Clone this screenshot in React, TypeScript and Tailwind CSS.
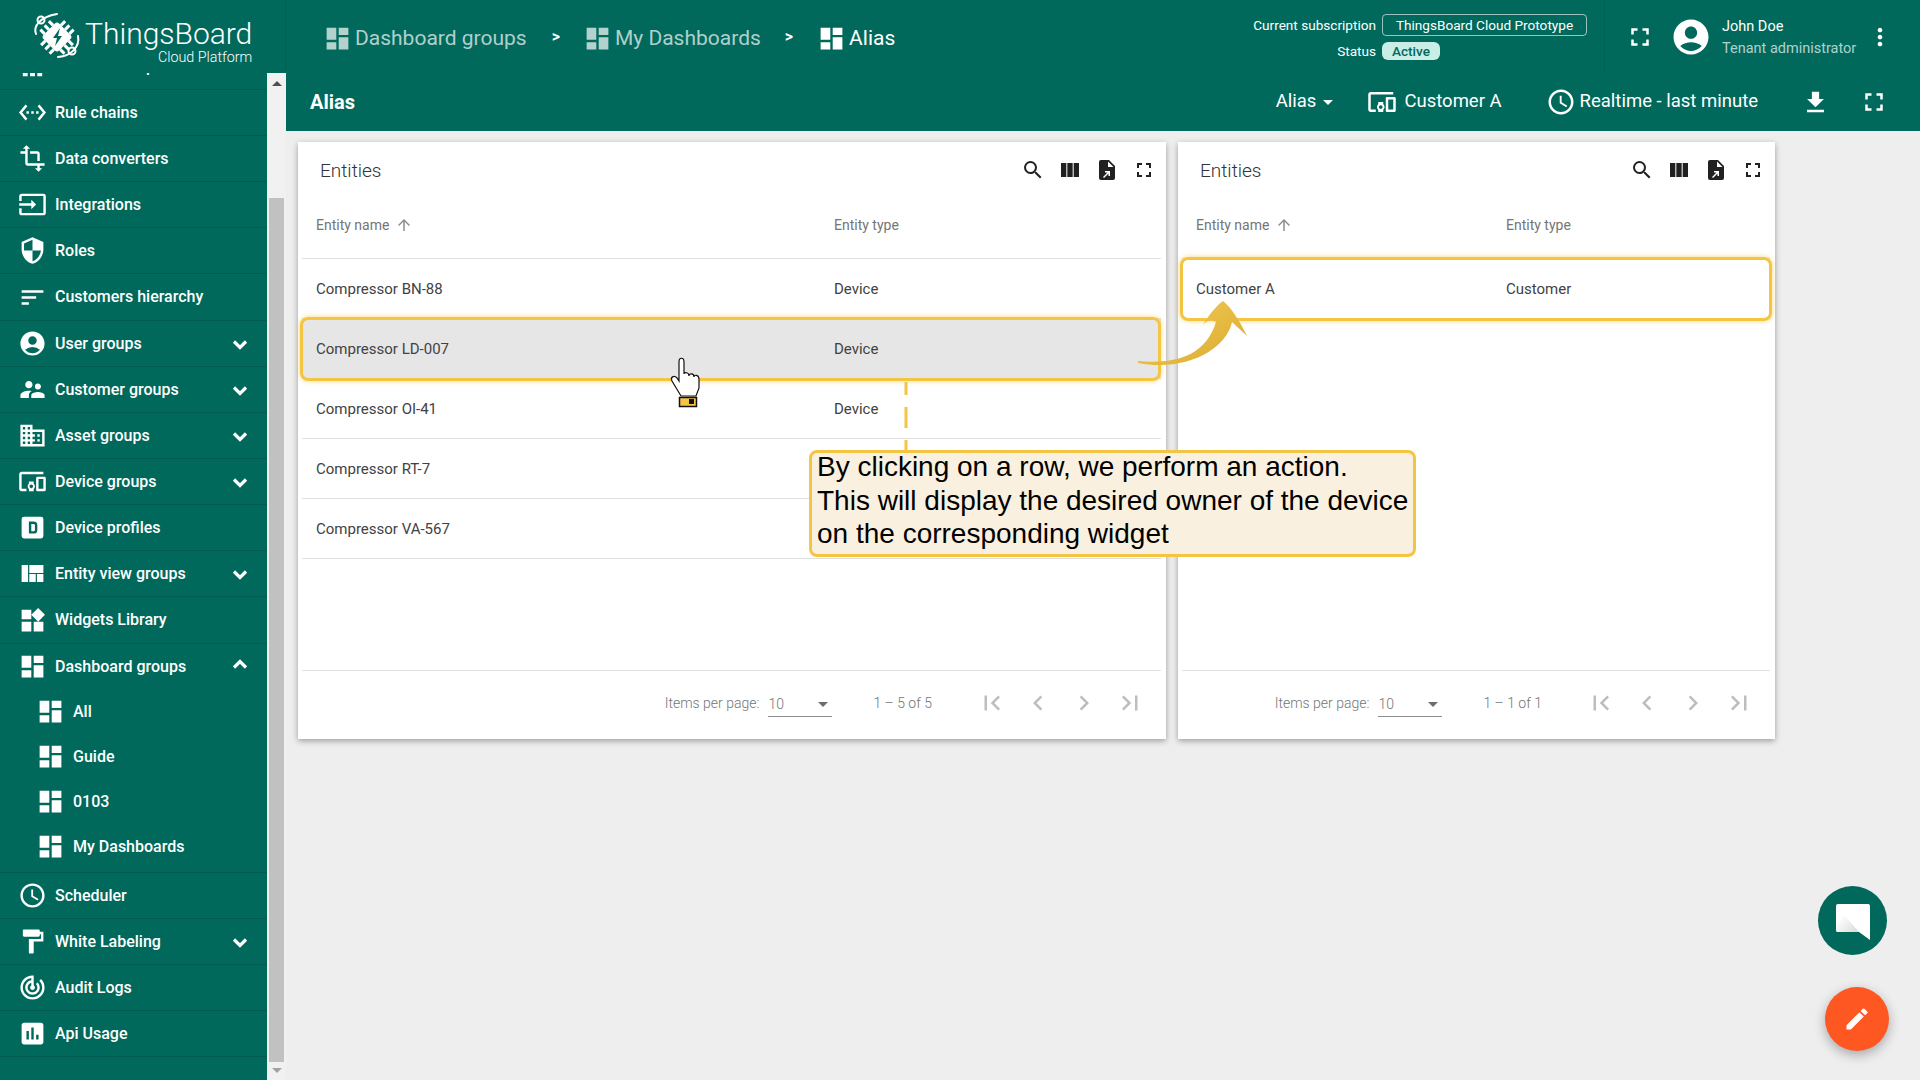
import type { ReactNode } from "react";
import {
  MdAccessTime,
  MdAccountCircle,
  MdApps,
  MdArrowDropDown,
  MdArrowUpward,
  MdAssessment,
  MdChevronLeft,
  MdChevronRight,
  MdDashboard,
  MdDevicesOther,
  MdDomain,
  MdEdit,
  MdFileDownload,
  MdFirstPage,
  MdFormatPaint,
  MdFullscreen,
  MdInput,
  MdLastPage,
  MdMoreVert,
  MdSchedule,
  MdSearch,
  MdSecurity,
  MdSettingsEthernet,
  MdSort,
  MdSupervisorAccount,
  MdTrackChanges,
  MdTransform,
  MdViewColumn,
  MdViewQuilt,
  MdWidgets,
} from "react-icons/md";

const DeviceProfileIcon = ({ size = 24 }: { size?: number }) => (
  <svg width={size} height={size} viewBox="0 0 24 24" fill="currentColor">
    <path
      fillRule="evenodd"
      d="M5 3h14a2 2 0 0 1 2 2v14a2 2 0 0 1-2 2H5a2 2 0 0 1-2-2V5a2 2 0 0 1 2-2zm4 4v10h4a3 3 0 0 0 3-3v-4a3 3 0 0 0-3-3H9zm2 2h2a1 1 0 0 1 1 1v4a1 1 0 0 1-1 1h-2V9z"
    />
  </svg>
);

const ExportIcon = ({ size = 24 }: { size?: number }) => (
  <svg width={size} height={size} viewBox="0 0 24 24" fill="currentColor">
    <path
      fillRule="evenodd"
      d="M6 2h8l6 6v12a2 2 0 0 1-2 2H6a2 2 0 0 1-2-2V4a2 2 0 0 1 2-2zm7 1.500V9h5.500L13 3.500zM9 20l4.500-4.500V18H15v-5h-5v1.500h2.500L8 19z"
    />
  </svg>
);

// the thick chevron of the expandable menu rows
const Chevron = ({ up }: { up?: boolean }) => (
  <svg width="16" height="12" viewBox="0 0 16 12" className={`mr-[19px] ${up ? "-mt-[6px]" : "mt-[3px]"}`}>
    <path
      d={up ? "M2 9.500l6-6 6 6" : "M2 2.500l6 6 6-6"}
      fill="none"
      stroke="currentColor"
      strokeWidth="3.200"
    />
  </svg>
);

const Logo = () => (
  <svg width="100" height="73" viewBox="0 0 100 73" className="shrink-0 text-white">
    <g fill="none" stroke="currentColor" strokeWidth="2">
      <path d="M36 34C33 26 40 17 57 14" strokeLinecap="round" />
      <circle cx="41" cy="20" r="3.500" />
      <path d="M78 36C80 46 72 56 58 57" strokeLinecap="round" />
      <circle cx="72" cy="51" r="3.500" />
    </g>
    <g transform="rotate(45 57 37)" fill="currentColor">
      <rect x="46" y="26" width="22" height="22" rx="3" />
      <path d="M50 20h3v6h-3zM56 20h3v6h-3zM62 20h3v6h-3zM50 48h3v6h-3zM56 48h3v6h-3zM62 48h3v6h-3zM40 30h6v3h-6zM40 36h6v3h-6zM40 42h6v3h-6zM68 30h6v3h-6zM68 36h6v3h-6zM68 42h6v3h-6z" />
    </g>
    <path d="M60 28l-7 10h4l-2 8 7-10h-4z" fill="#00695c" />
  </svg>
);

const NavRow = ({
  icon,
  label,
  arrow,
  tall,
}: {
  icon: ReactNode;
  label: string;
  arrow?: boolean;
  tall?: boolean;
}) => (
  <div
    className={`flex shrink-0 items-center border-b border-[#005a4f] pl-[18px] ${
      tall ? "h-[47px]" : "h-[46px]"
    }`}
  >
    <span className="flex w-[37px] shrink-0">{icon}</span>
    <span className="flex-1 text-[16px] font-medium whitespace-nowrap">{label}</span>
    {arrow && <Chevron />}
  </div>
);

const SubRow = ({ label }: { label: string }) => (
  <div className="flex h-[45px] items-center pl-[36px]">
    <span className="flex w-[37px] shrink-0">
      <MdDashboard size={29} />
    </span>
    <span className="text-[16px] font-medium">{label}</span>
  </div>
);

const Sidebar = () => (
  <aside className="relative z-10 flex h-full w-[286px] shrink-0 flex-col bg-[#00695c] text-white">
    <div className="flex h-[73px] shrink-0 items-center border-r border-[#005f53]">
      <Logo />
      <div className="-ml-[15px] flex flex-col items-end">
        <span className="mt-[9px] text-[30px] leading-[31px] font-light">ThingsBoard</span>
        <span className="text-[14.300px] leading-[16px] font-light">Cloud Platform</span>
      </div>
    </div>
    <div className="flex min-h-0 flex-1">
      <nav className="w-[267px] shrink-0 overflow-hidden">
        <div className="-mt-[29px] flex flex-col">
          <NavRow icon={<MdApps size={29} />} label="Solution templates" />
          <NavRow icon={<MdSettingsEthernet size={29} />} label="Rule chains" />
          <NavRow icon={<MdTransform size={29} />} label="Data converters" />
          <NavRow icon={<MdInput size={29} />} label="Integrations" />
          <NavRow icon={<MdSecurity size={29} />} label="Roles" />
          <NavRow icon={<MdSort size={29} />} label="Customers hierarchy" tall />
          <NavRow icon={<MdAccountCircle size={29} />} label="User groups" arrow />
          <NavRow icon={<MdSupervisorAccount size={29} />} label="Customer groups" arrow />
          <NavRow icon={<MdDomain size={29} />} label="Asset groups" arrow />
          <NavRow icon={<MdDevicesOther size={29} />} label="Device groups" arrow />
          <NavRow icon={<DeviceProfileIcon size={29} />} label="Device profiles" />
          <NavRow icon={<MdViewQuilt size={29} />} label="Entity view groups" arrow />
          <NavRow icon={<MdWidgets size={29} />} label="Widgets Library" tall />
          <div className="flex h-[45px] shrink-0 items-center pl-[18px]">
            <span className="flex w-[37px] shrink-0">
              <MdDashboard size={29} />
            </span>
            <span className="flex-1 text-[16px] font-medium">Dashboard groups</span>
            <Chevron up />
          </div>
          <div className="flex h-[184px] shrink-0 flex-col border-b border-[#005a4f]">
            <SubRow label="All" />
            <SubRow label="Guide" />
            <SubRow label="0103" />
            <SubRow label="My Dashboards" />
          </div>
          <NavRow icon={<MdSchedule size={29} />} label="Scheduler" />
          <NavRow icon={<MdFormatPaint size={29} />} label="White Labeling" arrow />
          <NavRow icon={<MdTrackChanges size={29} />} label="Audit Logs" />
          <NavRow icon={<MdAssessment size={29} />} label="Api Usage" />
        </div>
      </nav>
      <div className="flex w-[19px] shrink-0 flex-col items-center bg-[#f1f1f1]">
        <div className="mt-[8px] h-0 w-0 border-x-[5px] border-b-[5px] border-x-transparent border-b-[#505050]" />
        <div className="mt-[112px] h-[864px] w-[15px] shrink-0 bg-[#c1c1c1]" />
        <div className="mt-[6px] h-0 w-0 border-x-[5px] border-t-[5px] border-x-transparent border-t-[#a3a3a3]" />
      </div>
    </div>
  </aside>
);

const Crumb = ({ label, dim }: { label: string; dim?: boolean }) => (
  <div className={`flex items-center ${dim ? "text-white/70" : "text-white"}`}>
    <MdDashboard size={29} className="mr-[3px]" />
    <span className="text-[21px] font-normal">{label}</span>
  </div>
);

const TopBar = () => (
  <header className="h-[131px] shrink-0 bg-[#00695c] text-white">
    <div className="flex h-[73px] items-center">
      <div className="mt-[4px] flex items-center pl-[37px]">
        <Crumb label="Dashboard groups" dim />
        <span className="ml-[25px] mr-[23px] -mt-[3px] text-[16px] font-bold">&gt;</span>
        <Crumb label="My Dashboards" dim />
        <span className="ml-[24px] mr-[24px] -mt-[3px] text-[16px] font-bold">&gt;</span>
        <Crumb label="Alias" />
      </div>
      <div className="mt-[2px] ml-auto flex h-full shrink-0 flex-col justify-center gap-[5px] text-[13.600px] whitespace-nowrap">
        <div className="flex items-center justify-end">
          <span className="mr-[6px]">Current subscription</span>
          <span className="flex h-[22px] w-[205px] shrink-0 items-center justify-center rounded-[4px] border border-white/60">
            ThingsBoard Cloud Prototype
          </span>
        </div>
        <div className="flex items-center justify-end pr-[147px]">
          <span className="mr-[6px]">Status</span>
          <span className="flex h-[18px] w-[58px] shrink-0 items-center justify-center rounded-[6px] bg-[#c8eee6] font-medium text-[#00695c]">
            Active
          </span>
        </div>
      </div>
      <div className="ml-[17px] flex h-full w-[316px] shrink-0 items-center border-l border-[#005f53]">
        <MdFullscreen size={30} className="ml-[20px]" />
        <MdAccountCircle size={42} className="ml-[15px]" />
        <div className="mt-[2px] ml-[10px] flex flex-col gap-[4px] text-[14.500px] leading-[18px] whitespace-nowrap">
          <span>John Doe</span>
          <span className="text-white/70">Tenant administrator</span>
        </div>
        <MdMoreVert size={28} className="ml-[10px]" />
      </div>
    </div>
    <div className="flex h-[58px] items-center">
      <span className="pl-[24px] text-[20px] font-bold">Alias</span>
      <div className="ml-auto flex items-center pr-[31px] text-[18.500px]">
        <span>Alias</span>
        <MdArrowDropDown size={24} className="-mr-[2px]" />
        <MdDevicesOther size={30} className="ml-[29px]" />
        <span className="ml-[7px]">Customer A</span>
        <MdAccessTime size={30} className="ml-[44px]" />
        <span className="ml-[4px]">Realtime - last minute</span>
        <MdFileDownload size={29} className="ml-[43px]" />
        <MdFullscreen size={30} className="ml-[29px]" />
      </div>
    </div>
  </header>
);

const Pager = ({ range, gap }: { range: string; gap: string }) => (
  <div className="flex h-[68px] shrink-0 items-center justify-end pb-[4px] text-[14px] font-light text-[#757575]">
    <span>Items per page:</span>
    <div className="ml-[9px] flex h-[28px] w-[64px] items-center justify-between border-b border-[#8c8c8c] pt-[4px]">
      <span>10</span>
      <MdArrowDropDown size={24} className="-mr-[3px] -mt-[2px] text-[#6e6e6e]" />
    </div>
    <span className={`ml-[41px] ${gap}`}>{range}</span>
    <div className="mr-[16px] flex gap-[16px] text-[#bdbdbd]">
      <MdFirstPage size={30} />
      <MdChevronLeft size={30} />
      <MdChevronRight size={30} />
      <MdLastPage size={30} />
    </div>
  </div>
);

const Row = ({
  name,
  type,
  cols,
  selected,
  highlight,
}: {
  name: string;
  type: string;
  cols: string;
  selected?: boolean;
  highlight?: string;
}) => (
  <div
    className={`relative grid h-[60px] shrink-0 items-center border-b border-[#e0e0e0] pt-[2px] pl-[14px] text-[15px] text-[#424242] ${cols} ${
      selected ? "bg-[#e6e6e6]" : ""
    }`}
  >
    <span>{name}</span>
    <span>{type}</span>
    {highlight && (
      <div
        className={`absolute -top-[2px] -bottom-[3px] -left-[2px] rounded-[8px] border-[3px] border-[#f4c542] shadow-[0_0_5px_rgba(244,197,66,0.7)] ${highlight}`}
      />
    )}
  </div>
);

const EntitiesCard = ({
  width,
  cols,
  children,
  range,
  gap,
}: {
  width: string;
  cols: string;
  children: ReactNode;
  range: string;
  gap: string;
}) => (
  <section
    className={`flex h-[597px] shrink-0 flex-col bg-white pr-[5px] pl-[4px] shadow-[0_2px_6px_rgba(0,0,0,0.35)] ${width}`}
  >
    <div className="flex h-[56px] shrink-0 items-center pr-[5px] pl-[18px]">
      <span className="mt-[2px] text-[19px] font-light text-[#333]">Entities</span>
      <div className="ml-auto flex gap-[13px] text-[#212121]">
        <MdSearch size={24} />
        <MdViewColumn size={24} />
        <ExportIcon size={24} />
        <MdFullscreen size={24} />
      </div>
    </div>
    <div
      className={`grid h-[61px] shrink-0 items-center border-b border-[#e0e0e0] pb-[6px] pl-[14px] text-[14px] text-[#757575] ${cols}`}
    >
      <span className="flex items-center">
        Entity name
        <MdArrowUpward size={18} className="ml-[6px] text-[#8c8c8c]" />
      </span>
      <span>Entity type</span>
    </div>
    <div className="flex flex-1 flex-col border-b border-[#e0e0e0]">{children}</div>
    <Pager range={range} gap={gap} />
  </section>
);

const Callout = () => (
  <>
    <svg width="1920" height="1080" className="pointer-events-none absolute top-0 left-0 z-20">
      <defs>
        <linearGradient id="arrowShade" x1="0" y1="0" x2="1" y2="1">
          <stop offset="0" stopColor="#f6cf5a" />
          <stop offset="1" stopColor="#d9a92e" />
        </linearGradient>
      </defs>
      <path d="M906 382v13M906 407v21M906 440v11" stroke="#f4c542" strokeWidth="3" />
      <path
        d="M1138 361C1172 364 1205 358 1216 322C1210 318 1206 322 1203 325C1208 316 1216 306 1223 301C1232 308 1240 322 1247 336L1232 322C1226 350 1185 372 1138 363Z"
        fill="url(#arrowShade)"
      />
      <path
        d="M679 362C679 357 684 357 684 362V374C684 372 689 372 689 376C689 373 694 373 694 377C694 374 699 375 699 379V388L696 396H681L672 381C670 377 674 375 677 378L679 381Z"
        fill="#fff"
        stroke="#111"
        strokeWidth="1.200"
      />
      <rect x="679.500" y="397.500" width="17" height="9" fill="#f4c542" stroke="#111" strokeWidth="1.500" />
      <rect x="689" y="399" width="5" height="5" fill="#111" />
    </svg>
    <div className="absolute top-[450px] left-[809px] z-20 h-[107px] w-[607px] rounded-[8px] border-[3px] border-[#f4c542] bg-[#f9f0df] pl-[5px] text-[28px] leading-[33.500px] whitespace-nowrap text-black [font-family:'Liberation_Sans',sans-serif]">
      <div className="-mt-[3px]">
        By clicking on a row, we perform an action.
        <br />
        This will display the desired owner of the device
        <br />
        on the corresponding widget
      </div>
    </div>
  </>
);

const App = () => (
  <div className="relative flex h-[1080px] w-[1920px] overflow-hidden bg-[#eeeeee] [font-family:Roboto,sans-serif]">
    <Sidebar />
    <main className="flex min-w-0 flex-1 flex-col">
      <TopBar />
      <div className="flex gap-[12px] pt-[11px] pl-[12px]">
        <EntitiesCard width="w-[868px]" cols="grid-cols-[518px_1fr]" range="1 – 5 of 5" gap="mr-[45px]">
          <Row name="Compressor BN-88" type="Device" cols="grid-cols-[518px_1fr]" />
          <Row name="Compressor LD-007" type="Device" cols="grid-cols-[518px_1fr]" selected highlight="right-0" />
          <Row name="Compressor OI-41" type="Device" cols="grid-cols-[518px_1fr]" />
          <Row name="Compressor RT-7" type="Device" cols="grid-cols-[518px_1fr]" />
          <Row name="Compressor VA-567" type="Device" cols="grid-cols-[518px_1fr]" />
        </EntitiesCard>
        <EntitiesCard width="w-[597px]" cols="grid-cols-[310px_1fr]" range="1 – 1 of 1" gap="mr-[44px]">
          <Row name="Customer A" type="Customer" cols="grid-cols-[310px_1fr]" highlight="-right-[2px]" />
        </EntitiesCard>
      </div>
    </main>
    <Callout />
    <button className="absolute top-[886px] left-[1818px] flex h-[69px] w-[69px] items-center justify-center rounded-full bg-[#00695c]">
      <svg width="36" height="40" viewBox="0 0 36 40">
        <path d="M3 3h30a2 2 0 0 1 2 2v34L24 31H3a2 2 0 0 1-2-2V5a2 2 0 0 1 2-2z" fill="#fff" />
        <defs>
          <linearGradient id="chatShade" x1="0" y1="0" x2="1" y2="1">
            <stop offset="0.300" stopColor="#fff" />
            <stop offset="1" stopColor="#d8d8d8" />
          </linearGradient>
        </defs>
        <path d="M1 5L24 31H3a2 2 0 0 1-2-2z" fill="url(#chatShade)" />
      </svg>
    </button>
    <button className="absolute top-[987px] left-[1825px] flex h-[64px] w-[64px] items-center justify-center rounded-full bg-[#ff5722] text-white shadow-[0_4px_12px_rgba(0,0,0,0.3)]">
      <MdEdit size={28} />
    </button>
  </div>
);

export default App;
